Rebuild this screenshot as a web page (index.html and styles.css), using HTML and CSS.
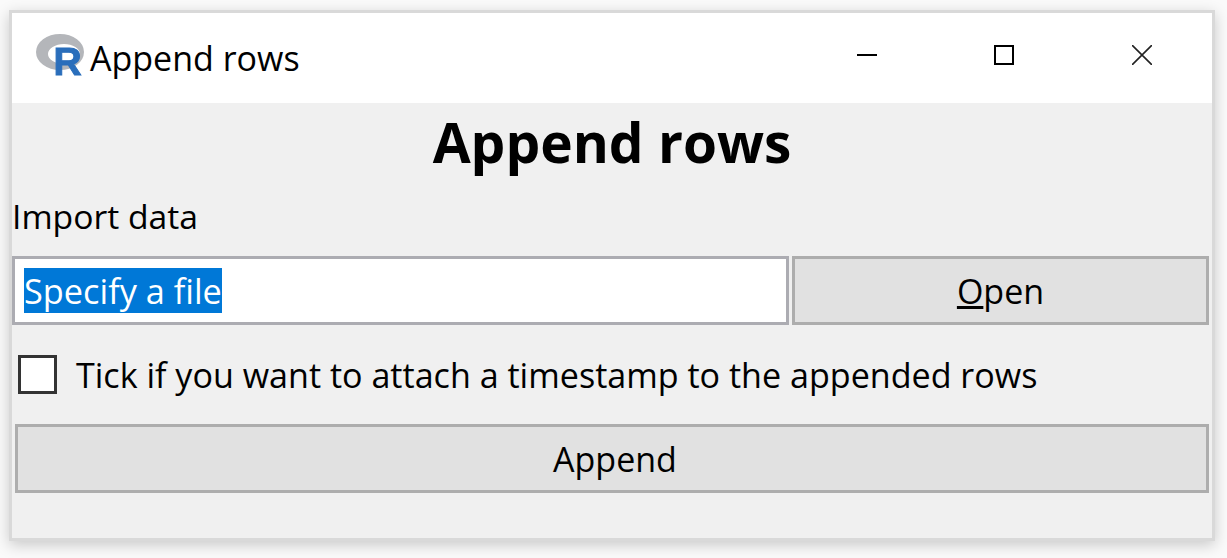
FILE: index.html
```html
<!DOCTYPE html>
<html lang="en">
<head>
    <meta charset="UTF-8">
    <title>Append rows</title>
    <link rel="stylesheet" href="styles.css">
</head>
<body>
    <div class="window">
        <div class="titlebar">
            <svg class="r-logo" viewBox="0 0 48 54" width="48" height="54">
                <path fill-rule="evenodd" fill="#b4b6ba" d="M0 19a24 18 0 1 0 48 0a24 18 0 1 0 -48 0zM12 21a16 10 0 1 1 32 0a16 10 0 1 1 -32 0z"/>
                <text x="17.5" y="42" class="r-letter">R</text>
            </svg>
            <span class="title-text">Append rows</span>
            <div class="controls">
                <div class="ctrl">
                    <svg width="20" height="20" viewBox="0 0 20 20"><path d="M0 10h20" stroke="#000" stroke-width="2"/></svg>
                </div>
                <div class="ctrl">
                    <svg width="20" height="20" viewBox="0 0 20 20"><rect x="1" y="1" width="18" height="18" fill="none" stroke="#000" stroke-width="2"/></svg>
                </div>
                <div class="ctrl">
                    <svg width="20" height="20" viewBox="0 0 20 20"><path d="M0 0l20 20M20 0L0 20" stroke="#222" stroke-width="1.6"/></svg>
                </div>
            </div>
        </div>
        <div class="content">
            <h1>Append rows</h1>
            <div class="import-label">Import data</div>
            <div class="file-row">
                <div class="file-input"><span class="selected">Specify a file</span></div>
                <div class="btn open-btn"><span><u>O</u>pen</span></div>
            </div>
            <div class="tick-row">
                <div class="checkbox"></div>
                <span>Tick if you want to attach a timestamp to the appended rows</span>
            </div>
            <div class="btn append-btn">Append</div>
        </div>
    </div>
</body>
</html>
```

FILE: styles.css
```css
html, body {
    margin: 0;
    height: 100%;
}
body {
    background-color: #fafafa;
    font-family: "Open Sans", sans-serif;
    color: #000;
    overflow: hidden;
    padding: 10px 0 0 9px;
    box-sizing: border-box;
}
.window {
    width: 1200px;
    height: 525px;
    border: 3px solid #d9d9d9;
    background-color: #f0f0f0;
    box-shadow: 0 4px 14px rgba(0, 0, 0, 0.2);
}
.titlebar {
    height: 90px;
    display: flex;
    align-items: center;
    background-color: white;
    padding-left: 24px;
}
.r-logo {
    flex: none;
    margin-top: 4px;
    filter: blur(0.7px);
}
.r-letter {
    font-family: "Liberation Sans", sans-serif;
    font-size: 39px;
    font-weight: bold;
    fill: #2a6ebb;
    stroke: #2a6ebb;
    stroke-width: 1;
}
.title-text {
    font-size: 34px;
    margin-left: 6px;
}
.controls {
    display: flex;
    margin-left: auto;
    margin-right: 2px;
    margin-top: -6px;
}
.ctrl {
    width: 137px;
    height: 60px;
    display: flex;
    align-items: center;
    justify-content: center;
}
.ctrl:last-child {
    margin-left: 1px;
}
.content {
    display: flex;
    flex-direction: column;
}
h1 {
    margin: 6px 0 0;
    height: 66px;
    line-height: 66px;
    text-align: center;
    font-size: 55px;
    font-weight: bold;
}
.import-label {
    font-size: 33.7px;
    height: 48px;
    line-height: 48px;
    margin-top: 17px;
}
.file-row {
    display: flex;
    gap: 3px;
    height: 69px;
    margin-top: 16px;
    margin-right: 3px;
}
.file-input {
    width: 777px;
    box-sizing: border-box;
    border: 3px solid #acacb2;
    background-color: white;
    padding: 9px 9px;
    font-size: 34.3px;
    line-height: 45px;
}
.selected {
    display: inline-block;
    background-color: #0078d7;
    color: white;
}
.btn {
    box-sizing: border-box;
    border: 3px solid #adadad;
    background-color: #e1e1e1;
    font-size: 34px;
    display: flex;
    align-items: center;
    justify-content: center;
}
.open-btn {
    flex: 1;
}
.tick-row {
    display: flex;
    align-items: center;
    height: 39px;
    margin-top: 30px;
    margin-left: 6px;
    gap: 19px;
    font-size: 34.1px;
}
.checkbox {
    width: 39px;
    height: 39px;
    box-sizing: border-box;
    border: 3px solid #333;
    background-color: white;
    flex: none;
}
.append-btn {
    height: 69px;
    margin: 30px 3px 0;
    padding-left: 6px;
}
```
